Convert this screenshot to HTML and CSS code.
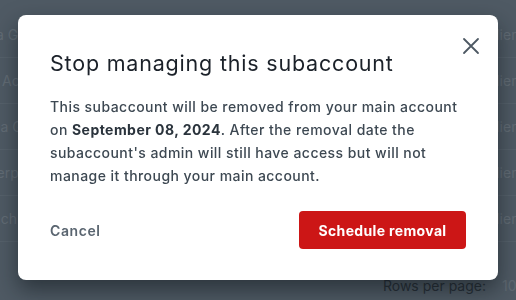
FILE: index.html
```html
<!DOCTYPE html>
<html lang="en">
<head>
    <meta charset="UTF-8">
    <meta name="viewport" content="width=device-width, initial-scale=1.0">
    <title>Stop managing subaccount</title>
    <link rel="stylesheet" href="styles.css">
</head>
<body>

    <!-- Page behind the dialog (scrolled sideways) -->
    <section class="list">
        <div class="row"><div class="name">Alpha Group</div><div class="type">Client</div></div>
        <div class="row"><div class="name">Main Account</div><div class="type">Client</div></div>
        <div class="row"><div class="name">Kappa Group</div><div class="type">Client</div></div>
        <div class="row"><div class="name">Amberpoint</div><div class="type">Client</div></div>
        <div class="row"><div class="name">Wrench Co</div><div class="type">Client</div></div>
        <div class="pager">
            <span class="pager-label">Rows per page:</span>
            <span class="pager-value">10</span>
        </div>
    </section>

    <!-- Dialog -->
    <div class="backdrop">
        <div class="modal" role="dialog">
            <button class="close-button" aria-label="Close">
                <svg width="18" height="18" viewBox="0 0 18 18">
                    <path d="M2 2 L16 16 M16 2 L2 16" stroke="currentColor" stroke-width="1.8" stroke-linecap="round"/>
                </svg>
            </button>
            <h2 class="modal-title">Stop managing this subaccount</h2>
            <p class="modal-text">
                This subaccount will be removed from your main account
                on <strong>September 08, 2024</strong>. After the removal date the
                subaccount's admin will still have access but will not
                manage it through your main account.
            </p>
            <div class="modal-actions">
                <button class="cancel-button">Cancel</button>
                <button class="danger-button">Schedule removal</button>
            </div>
        </div>
    </div>

</body>
</html>
```

FILE: styles.css
```css
/* General Styles */
body {
    margin: 0;
    font-family: Inter, "Open Sans", sans-serif;
    background-color: #4f5a64;
    overflow: hidden;
}

/* List behind the dialog */
.list {
    padding-top: 12px;
}

.row {
    display: flex;
    justify-content: space-between;
    align-items: center;
    height: 45px;
    border-bottom: 1px solid #56616b;
    color: #626c75;
    font-size: 14px;
    white-space: nowrap;
}

.name {
    margin-left: -34px;
}

.type {
    width: 30px;
}

.pager {
    display: flex;
    justify-content: flex-end;
    align-items: center;
    gap: 16px;
    height: 36px;
    margin-top: 25px;
    color: #262e35;
    font-size: 14px;
}

.pager-value {
    width: 14px;
    color: #5f6972;
}

/* Dialog */
.backdrop {
    position: fixed;
    inset: 0;
    display: flex;
    justify-content: center;
    align-items: flex-start;
    padding-top: 15px;
}

.modal {
    position: relative;
    box-sizing: border-box;
    width: 480px;
    height: 265px;
    padding: 33px 32px 0 32px;
    background-color: white;
    border-radius: 8px;
    box-shadow: 0 10px 22px rgba(15, 22, 28, 0.55);
}

.close-button {
    position: absolute;
    top: 18px;
    right: 14px;
    padding: 4px;
    border: none;
    background: none;
    color: #4d5863;
    cursor: pointer;
    display: flex;
}

.modal-title {
    margin: 0;
    font-size: 21.5px;
    font-weight: 400;
    line-height: 30px;
    letter-spacing: 0.8px;
    color: #1b2129;
}

.modal-text {
    margin: 17px 0 0 0;
    font-size: 14px;
    font-weight: 500;
    line-height: 23px;
    letter-spacing: 0.45px;
    color: #3d4852;
}

.modal-text strong {
    font-weight: 700;
    color: #2a333c;
}

.modal-actions {
    display: flex;
    justify-content: space-between;
    align-items: center;
    margin-top: 24px;
}

.cancel-button {
    border: none;
    background: none;
    padding: 0;
    font-family: inherit;
    font-size: 14px;
    font-weight: 600;
    letter-spacing: 0.6px;
    color: #5a6570;
    cursor: pointer;
}

.danger-button {
    width: 167px;
    height: 38px;
    border: none;
    border-radius: 4px;
    background-color: #cc1616;
    color: white;
    font-family: inherit;
    font-size: 14px;
    font-weight: 700;
    letter-spacing: 0.35px;
    cursor: pointer;
}
```
